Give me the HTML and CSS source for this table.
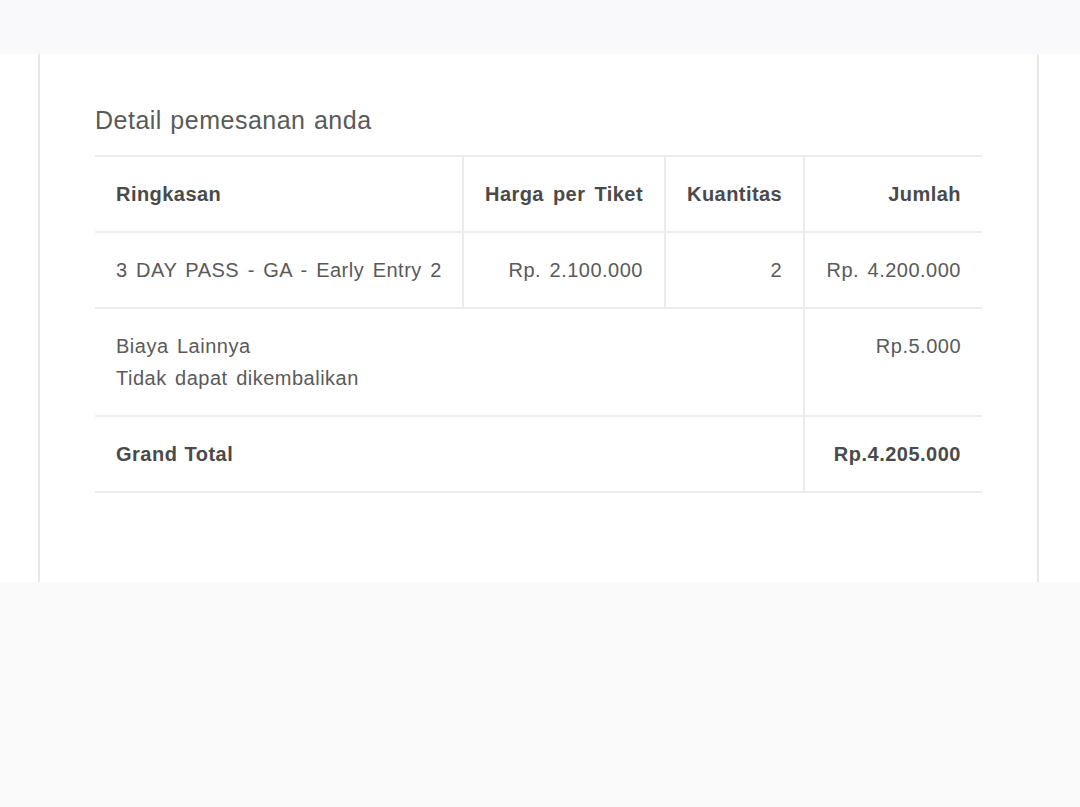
FILE: index.html
```html
<!DOCTYPE html>
<html lang="id">
<head>
<meta charset="utf-8">
<title>Detail pemesanan anda</title>
<link rel="stylesheet" href="styles.css">
</head>
<body>
<div class="topband"></div>
<div class="midband">
  <section class="card">
    <h2 class="title">Detail pemesanan anda</h2>
    <table class="order">
      <thead>
        <tr>
          <th class="c1">Ringkasan</th>
          <th class="c2 num">Harga per Tiket</th>
          <th class="c3 num">Kuantitas</th>
          <th class="c4 num">Jumlah</th>
        </tr>
      </thead>
      <tbody>
        <tr>
          <td>3 DAY PASS - GA - Early Entry 2</td>
          <td class="num">Rp. 2.100.000</td>
          <td class="num">2</td>
          <td class="num">Rp. 4.200.000</td>
        </tr>
        <tr class="fee">
          <td colspan="3">Biaya Lainnya<br>Tidak dapat dikembalikan</td>
          <td class="num">Rp.5.000</td>
        </tr>
        <tr class="total">
          <td colspan="3">Grand Total</td>
          <td class="num">Rp.4.205.000</td>
        </tr>
      </tbody>
    </table>
  </section>
</div>
<div class="bottomband"></div>
</body>
</html>
```

FILE: styles.css
```css
html, body {
  margin: 0;
  padding: 0;
}
body {
  background: #fafafa;
  font-family: "Liberation Sans", Arial, sans-serif;
  color: #555;
  width: 1080px;
  height: 807px;
  overflow: hidden;
}
.topband {
  height: 54px;
  background: #f9f9fb;
}
.midband {
  height: 528px;
  background: #ffffff;
  display: flex;
}
.card {
  margin-left: 38px;
  width: 887px;
  padding: 51px 55px 0 55px;
  border-left: 2px solid #e8e8e8;
  border-right: 2px solid #e8e8e8;
  box-sizing: content-box;
}
.title {
  margin: 0 0 20px 0;
  font-size: 25px;
  line-height: 30px;
  font-weight: normal;
  color: #5a5a5a;
  letter-spacing: 0.5px;
  word-spacing: 1px;
}
.order {
  width: 887px;
  border-collapse: collapse;
  table-layout: fixed;
  font-size: 20px;
  line-height: 32px;
  letter-spacing: 0.5px;
  word-spacing: 2.4px;
}
.order th,
.order td {
  border: 2px solid #ececec;
  padding: 21px 21px;
  text-align: left;
  vertical-align: top;
  white-space: nowrap;
}
.order tr > :first-child {
  border-left: none;
}
.order tr > :last-child {
  border-right: none;
}
.order th {
  font-weight: bold;
  color: #4a4a4a;
  letter-spacing: 0.45px;
  word-spacing: 3px;
}
.order td {
  color: #5a5a5a;
}
.order .num {
  text-align: right;
}
.c1 { width: 325px; }
.c2 { width: 158px; }
.c3 { width: 95px; }
.order .total td {
  font-weight: bold;
  color: #4a4a4a;
  word-spacing: 1px;
}
.bottomband {
  height: 225px;
  background: #fafafa;
}
```
